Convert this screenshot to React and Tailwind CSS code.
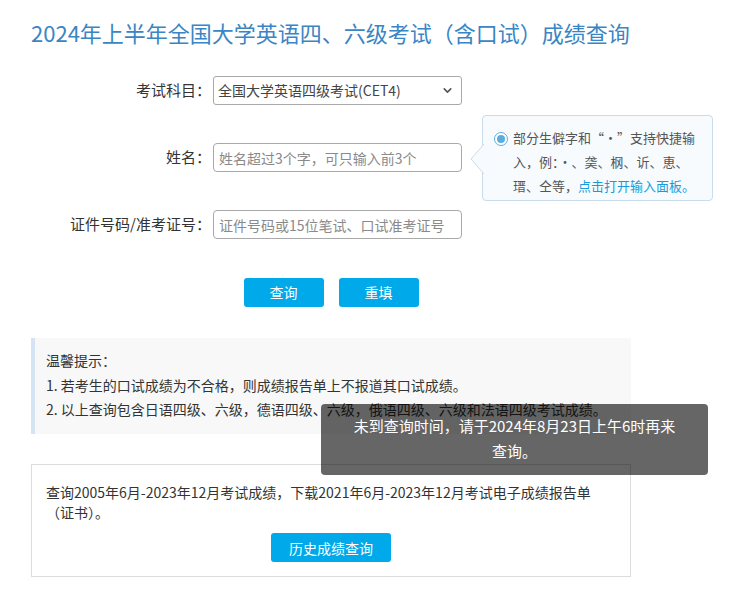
import { ChevronDown } from 'lucide-react';

const font = { fontFamily: '"Noto Sans CJK SC", "Noto Sans", sans-serif' };

function Row({ label, children }) {
  return (
    <div className="flex items-center h-[29px]">
      <label className="w-[180px] text-right text-[15px] text-[#333] shrink-0">
        {label}：
      </label>
      <div className="ml-[2px] relative">{children}</div>
    </div>
  );
}

function NameTip() {
  return (
    <div className="absolute left-[269px] top-1/2 -translate-y-1/2 w-[231px] h-[86px] bg-[#f7fbfe] border border-[#c9dcec] rounded-[4px] pl-[30px] pr-[10px] pt-[10px] text-[13px] leading-[24px] text-[#555]">
      <svg
        className="absolute left-[-13px] top-[28px]"
        width="14"
        height="30"
        viewBox="0 0 14 30"
      >
        <polygon points="14,0 1,15 14,30" fill="#f7fbfe" />
        <polyline points="14,0 1,15 14,30" fill="none" stroke="#c9dcec" />
      </svg>
      <span className="absolute left-[11px] top-[16px] w-[14px] h-[14px] rounded-full border border-[#5aaedf] bg-white flex items-center justify-center">
        <span className="w-[8px] h-[8px] rounded-full bg-[#5aaedf]" />
      </span>
      部分生僻字和“·”支持快捷输入，例：·、䶮、㭎、䜣、恵、瑨、仝等，
      <span className="text-[#1a9bd7] cursor-pointer">点击打开输入面板。</span>
    </div>
  );
}

export default function App() {
  return (
    <div className="relative w-[754px] h-[604px] bg-white overflow-hidden" style={font}>
      <div className="w-[600px] ml-[31px] pt-[16px]">
        <h1 className="text-[22px] leading-[32px] text-[#3a85c4] font-normal">
          2024年上半年全国大学英语四、六级考试（含口试）成绩查询
        </h1>

        <div className="mt-[28px] flex flex-col gap-[38px]">
          <Row label="考试科目">
            <div className="relative w-[249px] h-[29px]">
              <select className="appearance-none w-full h-full border border-[#a9a9a9] rounded-[3px] pl-[4px] pr-[24px] text-[14px] text-[#444] bg-white outline-none">
                <option>全国大学英语四级考试(CET4)</option>
              </select>
              <ChevronDown
                className="absolute right-[8px] top-[8px] text-[#555] pointer-events-none"
                size={13}
                strokeWidth={3}
              />
            </div>
          </Row>
          <Row label="姓名">
            <input
              className="w-[249px] h-[29px] border border-[#a9a9a9] rounded-[4px] px-[5px] text-[14px] text-[#333] placeholder:text-[#8a8a8a] outline-none"
              placeholder="姓名超过3个字，可只输入前3个"
            />
            <NameTip />
          </Row>
          <Row label="证件号码/准考证号">
            <input
              className="w-[249px] h-[29px] border border-[#a9a9a9] rounded-[4px] px-[5px] text-[14px] text-[#333] placeholder:text-[#8a8a8a] outline-none"
              placeholder="证件号码或15位笔试、口试准考证号"
            />
          </Row>
        </div>

        <div className="mt-[39px] flex justify-center gap-[15px]">
          <button className="w-[80px] h-[29px] rounded-[3px] bg-[#00a9ea] text-white text-[14px]">
            查询
          </button>
          <button className="w-[80px] h-[29px] rounded-[3px] bg-[#00a9ea] text-white text-[14px]">
            重填
          </button>
        </div>

        <div className="mt-[31px] h-[96px] bg-[#f8f8f8] border-l-[4px] border-[#d5e4f2] pl-[11px] pt-[10px] text-[14px] leading-[24.5px] text-[#333]">
          <p>温馨提示：</p>
          <p>1. 若考生的口试成绩为不合格，则成绩报告单上不报道其口试成绩。</p>
          <p>2. 以上查询包含日语四级、六级，德语四级、六级，俄语四级、六级和法语四级考试成绩。</p>
        </div>

        <div className="mt-[30px] h-[113px] border border-[#dcdcdc] px-[14px] pt-[17px] text-[14px] leading-[20px] text-[#333]">
          <p>查询2005年6月-2023年12月考试成绩，下载2021年6月-2023年12月考试电子成绩报告单（证书）。</p>
          <div className="mt-[11px] flex justify-center">
            <button className="w-[120px] h-[29px] rounded-[3px] bg-[#00a9ea] text-white text-[14px]">
              历史成绩查询
            </button>
          </div>
        </div>
      </div>

      <div className="absolute left-[321px] top-[404px] w-[387px] h-[71px] rounded-[4px] bg-black/60 px-[29px] pt-[9px] text-center text-white text-[15px] leading-[25px]">
        未到查询时间，请于2024年8月23日上午6时再来查询。
      </div>
    </div>
  );
}
